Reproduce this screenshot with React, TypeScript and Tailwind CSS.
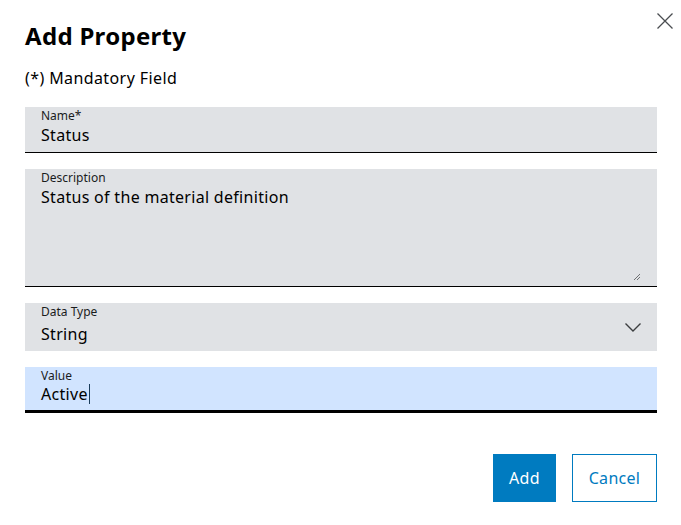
const font = { fontFamily: '"Noto Sans", "Open Sans", sans-serif' };

function Field({
  label,
  value,
  className = "",
  valueClass = "",
  children,
}: {
  label: string;
  value: string;
  className?: string;
  valueClass?: string;
  children?: React.ReactNode;
}) {
  return (
    <div className={`relative px-4 ${className}`}>
      <div className="pt-[1px] text-[12px] leading-[16px] text-[#1a1c1d]">{label}</div>
      <div className={`text-[16px] leading-[22px] tracking-[0.3px] text-black ${valueClass}`}>{value}</div>
      {children}
    </div>
  );
}

export default function App() {
  return (
    <div className="relative h-[525px] w-[681px] bg-white" style={font}>
      <button className="absolute right-[8px] top-[13px]">
        <svg width="16" height="16" viewBox="0 0 16 16">
          <path d="M0.5 0.5 L15.5 15.5 M15.5 0.5 L0.5 15.5" stroke="#4a4d50" strokeWidth="1.3" />
        </svg>
      </button>
      <div className="pl-[25px] pr-[24px] pt-[19px]">
        <h1 className="text-[24px] font-bold leading-[34px] tracking-[0.3px] text-black">Add Property</h1>
        <p className="mt-[14px] text-[16px] leading-[22px] tracking-[0.4px] text-black">(*) Mandatory Field</p>

        <div className="mt-[18px] flex flex-col gap-4">
          <Field label="Name*" value="Status" className="h-[46px] border-b border-black bg-[#e0e2e5]" />

          <Field
            label="Description"
            value="Status of the material definition"
            className="h-[118px] border-b border-black bg-[#e0e2e5]"
          >
            <svg className="absolute bottom-[5px] right-[16px]" width="8" height="8" viewBox="0 0 8 8">
              <path d="M1 7 L7 1 M4 7 L7 4" stroke="#6f7173" strokeWidth="1" />
            </svg>
          </Field>

          <Field label="Data Type" value="String" valueClass="mt-[3px]" className="h-[48px] bg-[#e0e2e5]">
            <svg className="absolute right-[16px] top-[20px]" width="16" height="9" viewBox="0 0 16 9">
              <path d="M0.5 0.5 L8 8 L15.5 0.5" fill="none" stroke="#3c3e40" strokeWidth="1.4" />
            </svg>
          </Field>

          <div className="relative h-[46px] border-b-[3px] border-black bg-[#d1e4ff] px-4">
            <div className="pt-[1px] text-[12px] leading-[16px] text-[#1a1c1d]">Value</div>
            <div className="flex items-center text-[16px] leading-[20px] tracking-[0.3px] text-black">
              Active
              <span className="ml-[1px] inline-block h-[20px] w-[1px] bg-[#1a3c5a]" />
            </div>
          </div>
        </div>

        <div className="mt-[41px] flex justify-end gap-4">
          <button className="h-[48px] w-[63px] bg-[#007bc0] text-[16px] tracking-[0.3px] text-white">Add</button>
          <button className="h-[48px] w-[85px] border border-[#007bc0] bg-white text-[16px] tracking-[0.3px] text-[#007bc0]">
            Cancel
          </button>
        </div>
      </div>
    </div>
  );
}
